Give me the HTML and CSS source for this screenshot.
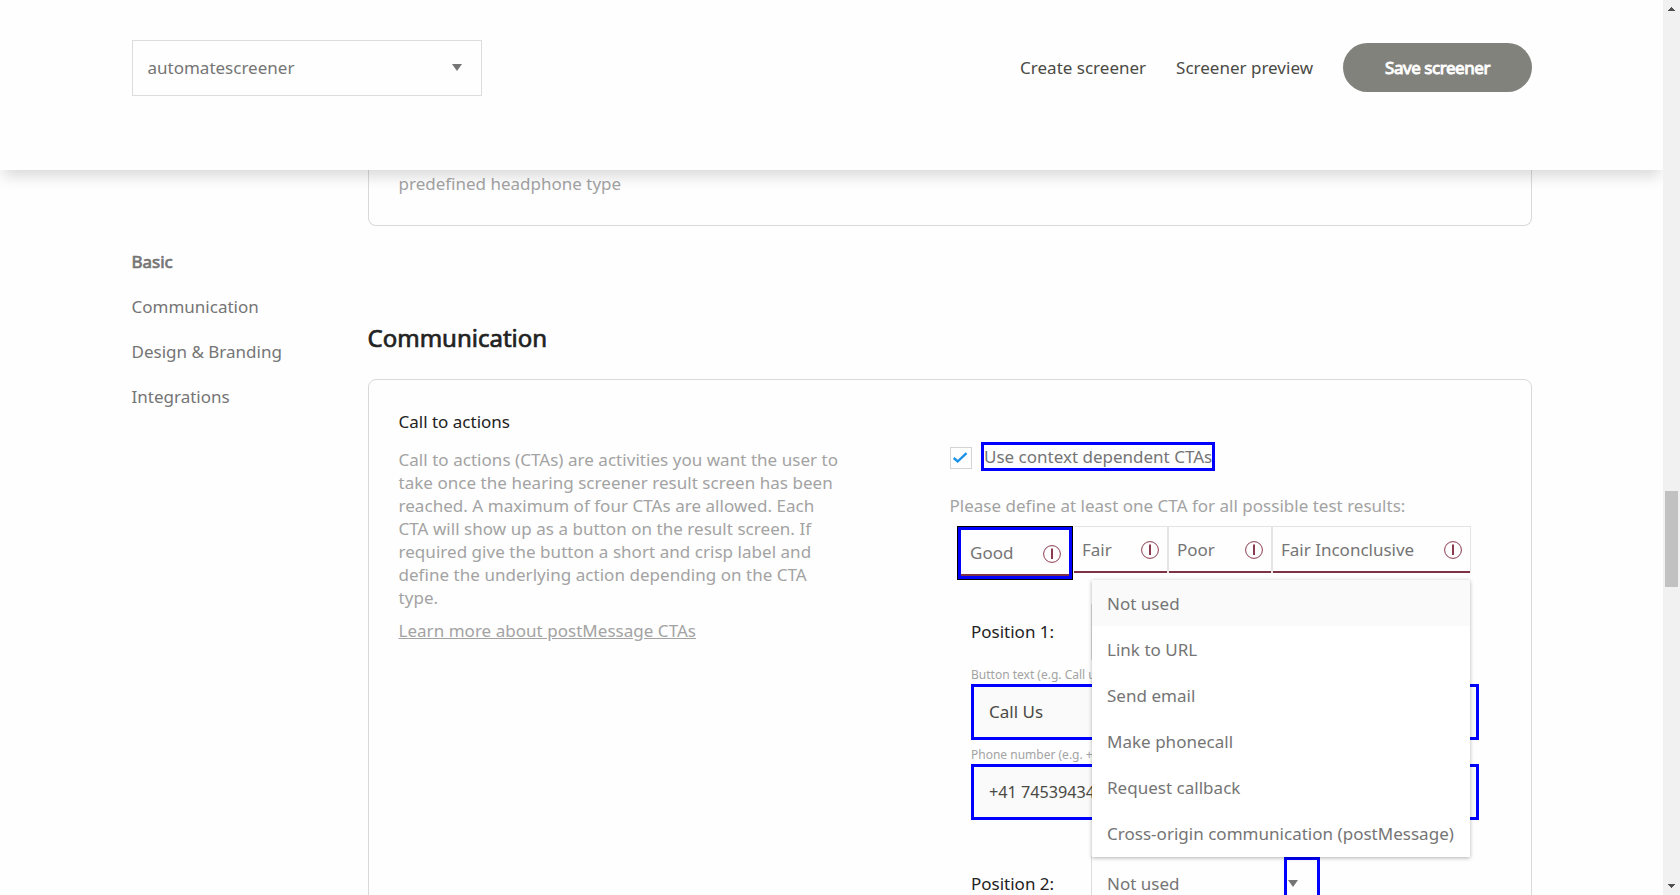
FILE: index.html
```
<!DOCTYPE html>
<html lang="en">
<head>
<meta charset="utf-8">
<title>Screener settings</title>
<link rel="stylesheet" href="styles.css">
</head>
<body>
<div class="app">
  <div class="page">
    <header class="header">
      <div class="screener-select"><span>automatescreener</span><i class="caret"></i></div>
      <nav class="actions">
        <a>Create screener</a>
        <a>Screener preview</a>
        <button class="save">Save screener</button>
      </nav>
    </header>
    <div class="body">
      <aside class="sidebar">
        <a class="active">Basic</a>
        <a>Communication</a>
        <a>Design &amp; Branding</a>
        <a>Integrations</a>
      </aside>
      <main class="content">
        <section class="card card-prev"><p>predefined headphone type</p></section>
        <h2>Communication</h2>
        <section class="card card-main">
          <div class="info">
            <h3>Call to actions</h3>
            <p>Call to actions (CTAs) are activities you want the user to take once the hearing screener result screen has been reached. A maximum of four CTAs are allowed. Each CTA will show up as a button on the result screen. If required give the button a short and crisp label and define the underlying action depending on the CTA type.</p>
            <a class="learn">Learn more about postMessage CTAs</a>
          </div>
          <div class="form">
            <div class="check-row">
              <span class="checkbox"><svg width="16" height="12" viewBox="0 0 16 12"><path d="M1.7 6 5.7 9.5 14.5 1.2" fill="none" stroke="#1b92ea" stroke-width="2.4"/></svg></span>
              <span class="check-label">Use context dependent CTAs</span>
            </div>
            <p class="hint">Please define at least one CTA for all possible test results:</p>
            <div class="tabs">
              <div class="tab tab-good"><span>Good</span><svg class="alert" viewBox="0 0 18 18"><circle cx="9" cy="9" r="8.4"/><path d="M9 3.5v2M9 5v9"/></svg></div>
              <div class="tab tab-fair"><span>Fair</span><svg class="alert" viewBox="0 0 18 18"><circle cx="9" cy="9" r="8.4"/><path d="M9 3.5v2M9 5v9"/></svg></div>
              <div class="tab tab-poor"><span>Poor</span><svg class="alert" viewBox="0 0 18 18"><circle cx="9" cy="9" r="8.4"/><path d="M9 3.5v2M9 5v9"/></svg></div>
              <div class="tab tab-inc"><span>Fair Inconclusive</span><svg class="alert" viewBox="0 0 18 18"><circle cx="9" cy="9" r="8.4"/><path d="M9 3.5v2M9 5v9"/></svg></div>
            </div>
            <div class="positions">
              <div class="position">
                <span>Position 1:</span>
                <div class="select">
                  <ul class="menu">
                    <li class="hover">Not used</li>
                    <li>Link to URL</li>
                    <li>Send email</li>
                    <li>Make phonecall</li>
                    <li>Request callback</li>
                    <li>Cross-origin communication (postMessage)</li>
                  </ul>
                </div>
              </div>
              <label class="field-label">Button text (e.g. Call us)</label>
              <div class="input">Call Us</div>
              <label class="field-label">Phone number (e.g. +41)</label>
              <div class="input phone">+41 74539434</div>
              <div class="position second">
                <span>Position 2:</span>
                <div class="select"><span>Not used</span><div class="caret-box"><i class="caret"></i></div></div>
              </div>
            </div>
          </div>
        </section>
      </main>
    </div>
  </div>
  <div class="scrollbar">
    <svg width="7" height="4" viewBox="0 0 7 4" shape-rendering="crispEdges"><path d="M3 0h1v1h1v1h1v1h1v1H0V3h1V2h1V1h1z"/></svg>
    <div class="thumb"></div>
    <svg width="7" height="4" viewBox="0 0 7 4" shape-rendering="crispEdges"><path d="M0 0h7v1H6v1H5v1H4v1H3V3H2V2H1V1H0z"/></svg>
  </div>
</div>
</body>
</html>
```

FILE: styles.css
```
* { box-sizing: border-box; margin: 0; padding: 0; }
body { font: 17px/23px "Noto Sans", sans-serif; color: #757575; background: #fefefe; overflow: hidden; }
.app { display: flex; width: 1680px; height: 895px; overflow: hidden; }
.page { flex: 1; height: 895px; overflow: hidden; }
.header { position: relative; z-index: 5; height: 170px; padding: 40px 131px 0 132px; display: flex; justify-content: space-between; align-items: flex-start; background: #fefefe; box-shadow: 0 9px 14px -3px rgba(0,0,0,.15); }
.screener-select { width: 350px; height: 56px; border: 1px solid #dcdcdc; padding: 0 19.5px 2px 14.5px; display: flex; align-items: center; justify-content: space-between; }
.caret { width: 0; height: 0; border: 5px solid transparent; border-top: 7px solid #757575; border-bottom: 0; }
.actions { display: flex; align-items: center; gap: 30px; padding-top: 3px; color: #4a4a45; }
.save { width: 189px; height: 49px; border: 0; border-radius: 25px; background: #82827d; color: #fff; font: inherit; letter-spacing: -.45px; -webkit-text-stroke: .9px #fff; }
.body { display: flex; }
.sidebar { width: 368px; padding: 80px 0 0 131.5px; display: flex; flex-direction: column; gap: 22px; }
.active { -webkit-text-stroke: .7px #757575; }
.content { width: 1164px; }
.card { border: 1px solid #d9d9d9; border-radius: 8px; }
.card-prev { height: 56px; border-top: 0; border-radius: 0 0 8px 8px; padding: 2px 0 0 29.5px; color: #a3a3a3; }
h2 { font-size: 24px; line-height: 33px; font-weight: 400; color: #222; -webkit-text-stroke: .7px #222; margin: 95px 0 25px -.5px; }
.card-main { display: flex; height: 600px; padding-left: 29.5px; }
.info { width: 551.5px; padding: 30px 108px 0 0; color: #a3a3a3; }
h3 { font-size: 17px; font-weight: 400; color: #222; margin-bottom: 15px; }
.info p { margin-bottom: 10px; letter-spacing: .04px; }
.learn { text-decoration: underline; letter-spacing: .03px; }
.form { width: 540px; padding-top: 62px; }
.check-row { display: flex; align-items: center; gap: 9px; height: 29px; }
.checkbox { width: 22px; height: 22px; margin-top: 3px; border: 1px solid #d4d4d4; display: flex; align-items: center; justify-content: center; padding: 0 2px 1px 0; }
.check-label { height: 29px; width: 234px; border: 3px solid #00f; white-space: nowrap; }
.hint { margin: 23px 0 0 -.5px; color: #a3a3a3; white-space: nowrap; letter-spacing: .01px; }
.tabs { display: flex; align-items: flex-start; margin: 9px 0 0 7px; width: 514px; height: 54px; }
.tab { height: 47px; display: flex; justify-content: space-between; align-items: center; padding: 2px 8px 1px 8px; border-top: 1px solid #e4e4e4; border-bottom: 2px solid #7d3246; white-space: nowrap; }
.tab-good { width: 116px; height: 54px; padding: 0 11px 1px 12px; border: 1px solid #000; box-shadow: inset 0 0 0 3px #00f, inset 0 -5px #7d3246; }
.tab-good .alert { margin-top: 3px; }
.tab-fair { width: 94px; margin-left: 1px; padding-right: 9px; }
.tab-poor { width: 102px; margin-left: 1px; box-shadow: -2px 0 #e4e4e4; }
.tab-inc { width: 197px; margin-left: 2px; box-shadow: -2px 0 #e4e4e4, 1px 0 #e4e4e4; }
.alert { width: 18px; height: 18px; margin-top: 1px; fill: none; stroke: #8c3a50; }
.alert path { stroke-width: 2; }
.positions { width: 508px; margin: 24px 0 0 21px; }
.position { display: flex; align-items: center; height: 56px; color: #222; }
.position > span { width: 120px; padding-bottom: 2px; }
.select { position: relative; width: 229px; height: 56px; border: 1px solid #dcdcdc; display: flex; align-items: center; padding: 0 0 2px 15px; color: #757575; }
.menu { position: absolute; z-index: 3; left: 0; top: -25px; width: 378px; height: 277px; background: #fff; list-style: none; box-shadow: 0 1px 4px rgba(0,0,0,.3); }
.menu li { height: 46px; line-height: 47px; padding-left: 15px; white-space: nowrap; letter-spacing: .02px; }
.menu .hover { background: #fafafa; }
.field-label { display: block; height: 24px; font-size: 12px; line-height: 30px; color: #a3a3a3; }
.input { height: 56px; border: 3px solid #00f; background: #fafafa; padding: 0 15px; line-height: 49px; color: #4a4a45; font-size: 17px; }
.phone { font-size: 16.2px; line-height: 51px; }
.second { margin-top: 36px; }
.caret-box { position: absolute; left: 192px; top: 0; width: 36px; height: 60px; border: 3px solid #00f; padding: 20px 0 0 .5px; }
.caret-box .caret { display: block; }
.scrollbar { width: 17px; height: 895px; padding: 7px 0; background: #f1f1f1; display: flex; flex-direction: column; align-items: center; fill: #505050; }
.thumb { width: 13px; height: 96px; margin: 480px 0 297px; background: #c1c1c1; }
```
